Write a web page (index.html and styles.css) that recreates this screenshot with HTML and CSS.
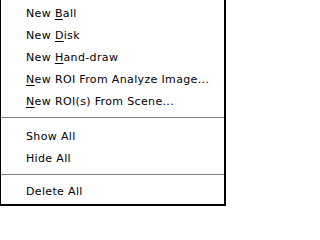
FILE: index.html
```html
<!DOCTYPE html>
<html>
<head>
<meta charset="utf-8">
<link rel="stylesheet" href="styles.css">
</head>
<body>
<div class="menu">
  <div class="item">New <u>B</u>all</div>
  <div class="item">New <u>D</u>isk</div>
  <div class="item">New <u>H</u>and-draw</div>
  <div class="item"><u>N</u>ew ROI From Analyze Image...</div>
  <div class="item"><u>N</u>ew ROI(s) From Scene...</div>
  <div class="sep sep-first"></div>
  <div class="item">Show All</div>
  <div class="item">Hide All</div>
  <div class="sep sep-second"></div>
  <div class="item">Delete All</div>
</div>
</body>
</html>
```
FILE: styles.css
```css
html, body {
  margin: 0;
  padding: 0;
  background: #fff;
}
.menu {
  box-sizing: border-box;
  width: 226px;
  height: 206px;
  border-left: 1px solid #000;
  border-right: 2px solid #000;
  border-bottom: 2px solid #000;
  padding-top: 3px;
  background: #fff;
  font-family: "DejaVu Sans", Verdana, sans-serif;
  font-size: 11px;
  letter-spacing: 0.35px;
  color: #000;
  display: flex;
  flex-direction: column;
}
.item {
  flex: none;
  height: 22px;
  line-height: 22px;
  padding-left: 25px;
  white-space: nowrap;
}
.item u {
  text-decoration-thickness: 1px;
  text-underline-offset: 2px;
}
.sep {
  flex: none;
  padding-top: 4px;
  box-sizing: border-box;
}
.sep-first {
  height: 13px;
}
.sep-second {
  height: 11px;
}
.sep::before {
  content: "";
  display: block;
  width: 100%;
  height: 1px;
  background: #808080;
}
```
